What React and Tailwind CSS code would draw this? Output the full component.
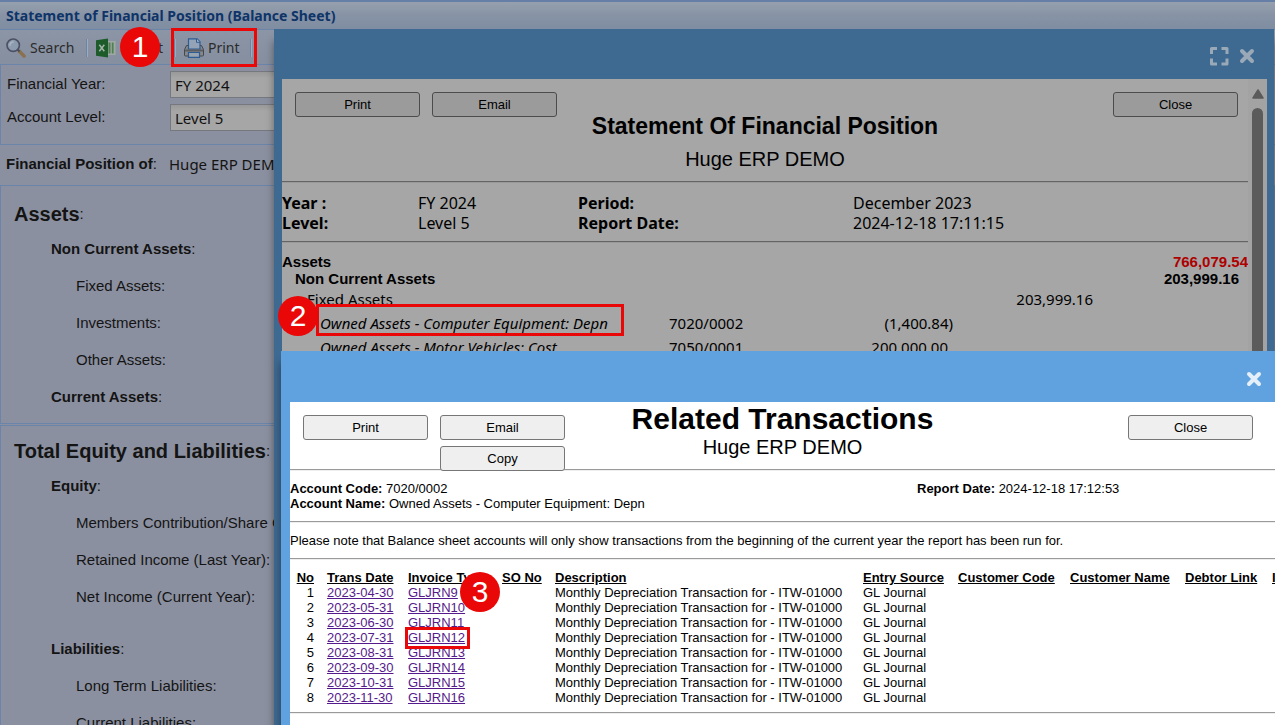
const ARIAL = "font-['Liberation_Sans',Arial,sans-serif]"
const TAHOMA = "font-['Noto_Sans',Tahoma,sans-serif]"

const assetRows = [
  { label: 'Non Current Assets', group: true },
  { label: 'Fixed Assets' },
  { label: 'Investments' },
  { label: 'Other Assets' },
  { label: 'Current Assets', group: true },
]

const equityRows = [
  { label: 'Equity', group: true },
  { label: 'Members Contribution/Share Capital' },
  { label: 'Retained Income (Last Year)' },
  { label: 'Net Income (Current Year)' },
]

const liabilityRows = [
  { label: 'Liabilities', group: true },
  { label: 'Long Term Liabilities' },
  { label: 'Current Liabilities' },
]

const transactions = [
  { date: '2023-04-30', invoice: 'GLJRN9' },
  { date: '2023-05-31', invoice: 'GLJRN10' },
  { date: '2023-06-30', invoice: 'GLJRN11' },
  { date: '2023-07-31', invoice: 'GLJRN12' },
  { date: '2023-08-31', invoice: 'GLJRN13' },
  { date: '2023-09-30', invoice: 'GLJRN14' },
  { date: '2023-10-31', invoice: 'GLJRN15' },
  { date: '2023-11-30', invoice: 'GLJRN16' },
]

const columns = [
  { label: 'Trans Date', width: 'w-[81px]' },
  { label: 'Invoice Type', width: 'w-[94px]' },
  { label: 'SO No', width: 'w-[53px]' },
  { label: 'Description', width: 'w-[308px]' },
  { label: 'Entry Source', width: 'w-[95px]' },
  { label: 'Customer Code', width: 'w-[112px]' },
  { label: 'Customer Name', width: 'w-[115px]' },
  { label: 'Debtor Link', width: 'w-[87px]' },
  { label: 'Invoice No', width: 'w-[100px]' },
]

/* ---------- icons ---------- */

function SearchIcon() {
  return (
    <svg className="w-5 h-5 shrink-0" viewBox="0 0 20 20" fill="none">
      <path d="M13.5 13.500l4.500 4.500" stroke="#8a7250" strokeWidth="3.6" strokeLinecap="round" />
      <path d="M11.500 11.500l2 2" stroke="#4a4f57" strokeWidth="2.200" />
      <circle cx="7.200" cy="7.200" r="6.200" fill="#8d9bae" stroke="#4b5065" strokeWidth="1.600" />
      <path d="M4 7.200a3.400 3.400 0 013.200-3.200" stroke="#a9b4c1" strokeWidth="1.600" strokeLinecap="round" />
    </svg>
  )
}

function ExcelIcon() {
  return (
    <svg className="w-5 h-5 shrink-0" viewBox="0 0 20 20">
      <path d="M11 3h8.500v14H11z" fill="#a0a8a2" />
      <path d="M12.500 4.500h2v11h-2zM15.800 4.500h1.800v11h-1.800z" fill="#4c8252" />
      <path d="M0 2.200L12 .5v19L0 17.800z" fill="#1d5c2a" />
      <path d="M3.300 6.800l5 6.400M8.300 6.800l-5 6.400" stroke="#a5b5a8" strokeWidth="1.500" />
    </svg>
  )
}

function PrinterIcon() {
  return (
    <svg className="w-5 h-5 shrink-0" viewBox="0 0 20 20">
      <path
        d="M2.500 7.500h15l2 4V17a1 1 0 01-1 1h-17a1 1 0 01-1-1v-5.500z"
        fill="#84878b"
        stroke="#45484d"
      />
      <path d="M4.500 11V.8h8.500l3 3V11z" fill="#94a3b5" stroke="#2d5c94" strokeWidth="1.200" />
      <path d="M12.500 .8v3.500h3.500" fill="#a8b4c0" stroke="#2d5c94" />
      <path d="M1 11.500h18v2H1z" fill="#5a5d61" />
      <path d="M4.500 14.500h11v4.800h-11z" fill="#98a3b0" stroke="#2d5c94" strokeWidth="1.200" />
    </svg>
  )
}

function CloseIcon() {
  return (
    <svg className="w-4 h-4" viewBox="0 0 16 16" fill="none">
      <path d="M3 3l10 10M13 3L3 13" stroke="currentColor" strokeWidth="4" strokeLinecap="round" />
    </svg>
  )
}

function ExpandIcon() {
  return (
    <svg className="w-5 h-5" viewBox="0 0 20 20" fill="none">
      <path
        d="M2.500 8V2.500H8M12.500 2.500H18V8M18 12.500V18h-5.500M8 18H2.500v-5.500"
        stroke="currentColor"
        strokeWidth="3"
        strokeLinejoin="round"
      />
    </svg>
  )
}

/* ---------- shared pieces ---------- */

function ReportButton({ dim, children }) {
  return (
    <button
      type="button"
      className={`relative w-[125px] h-[25px] shrink-0 rounded-[3px] border text-[13px] leading-none text-black ${
        dim ? 'bg-[#9b9b9b] border-[#4c4c4c]' : 'bg-[#efefef] border-[#767676]'
      }`}
    >
      {children}
    </button>
  )
}

function Rule({ dim }) {
  return (
    <hr
      className={`h-[2px] border-t border-b ${
        dim ? 'border-t-[#646464] border-b-[#999999]' : 'border-t-[#9a9a9a] border-b-[#eeeeee]'
      }`}
    />
  )
}

function Marker({ className, children }) {
  return (
    <span
      className={`absolute w-10 h-10 rounded-full bg-[#ea0707] text-white text-[30px] leading-10 text-center ${className}`}
    >
      {children}
    </span>
  )
}

function Highlight({ className }) {
  return <div className={`absolute border-3 border-[#ea0707] pointer-events-none ${className}`} />
}

/* ---------- main page ---------- */

function Separator() {
  return <span className="w-[2px] h-[18px] border-l border-[#6685ad] bg-[#a3aab4]" />
}

function Toolbar() {
  return (
    <div
      className={`flex items-center h-9 pt-px border-t border-b border-[#6a84aa] bg-linear-to-b from-[#8b95a5] to-[#858f9f] text-sm text-[#2b2b2b] ${TAHOMA}`}
    >
      <button type="button" className="flex items-center gap-1 w-[86px] pl-1.5">
        <SearchIcon />
        Search
      </button>
      <Separator />
      <button type="button" className="flex items-center gap-1 w-[86px] pl-2">
        <ExcelIcon />
        Export
      </button>
      <Separator />
      <button type="button" className="flex items-center gap-1 w-[74px] pl-2">
        <PrinterIcon />
        Print
      </button>
      <Separator />
    </div>
  )
}

function Field({ id, label, value }) {
  return (
    <div className="flex items-start h-[33px]">
      <label htmlFor={id} className="w-[163px] pt-[5px] text-[15px] leading-4">
        {label}:
      </label>
      <input
        id={id}
        defaultValue={value}
        className={`w-[260px] h-[27px] px-1 border border-[#75797f] bg-linear-to-b from-[#999999] to-[#a6a6a6] to-25% text-[15px] text-[#111] ${TAHOMA}`}
      />
    </div>
  )
}

function Rows({ rows }) {
  return rows.map(({ label, group }) => (
    <div key={label} className={`flex items-center h-[37px] whitespace-nowrap ${group ? 'pl-[50px]' : 'pl-[75px]'}`}>
      {group ? (
        <>
          <b>{label}</b>:
        </>
      ) : (
        `${label}:`
      )}
    </div>
  ))
}

function SectionTitle({ children }) {
  return (
    <h2 className="flex items-center h-[34px] pl-[13px] whitespace-nowrap">
      <b className="text-xl">{children}</b>:
    </h2>
  )
}

function BalanceSheetPage() {
  return (
    <main className="h-full text-[15px] text-[#141414] bg-[#8b90a0]">
      <div className="h-[29px] px-1.5 border-t-2 border-[#657fa6] bg-linear-to-b from-[#96a0ae] from-0% via-[#8793a5] via-50% to-[#7f8da2]">
        <h1 className={`text-sm leading-7 font-bold text-[#0e3468] ${TAHOMA}`}>
          Statement of Financial Position (Balance Sheet)
        </h1>
      </div>
      <Toolbar />
      <form className="h-20 pt-1.5 pl-1.5 border-l border-b border-[#6a84aa]">
        <Field id="year" label="Financial Year" value="FY 2024" />
        <Field id="level" label="Account Level" value="Level 5" />
      </form>
      <div className="flex items-center h-10 pl-1.5 pb-0.5 whitespace-nowrap">
        <div className="w-[163px]">
          <b>Financial Position of</b>:
        </div>
        <span className={TAHOMA}>Huge ERP DEMO</span>
      </div>
      <section className="pt-[11px] pb-[7px] border border-[#6a84aa]">
        <SectionTitle>Assets</SectionTitle>
        <Rows rows={assetRows} />
      </section>
      <section className="mt-px pt-2 border border-[#6a84aa]">
        <SectionTitle>Total Equity and Liabilities</SectionTitle>
        <Rows rows={equityRows} />
        <div className="mt-[15px]">
          <Rows rows={liabilityRows} />
        </div>
      </section>
    </main>
  )
}

/* ---------- first dialog ---------- */

function StatementDialog() {
  return (
    <div
      role="dialog"
      aria-label="Statement Of Financial Position"
      className="absolute left-[274px] right-px top-[29px] bottom-0 flex flex-col pl-2 pr-[7px] bg-[#3e6990] shadow-[0_12px_8px_rgba(0,0,0,0.4)]"
    >
      <div className="flex items-center justify-end gap-2.5 h-[50px] shrink-0 pt-1 pr-3 text-[#9aa9b8]">
        <button type="button" aria-label="Expand">
          <ExpandIcon />
        </button>
        <button type="button" aria-label="Close">
          <CloseIcon />
        </button>
      </div>

      <div className="flex flex-1 min-h-0 bg-[#a6a6a6] text-black">
        <div className="flex-1 min-w-0 overflow-hidden">
          <header className="grid grid-cols-[1fr_auto_1fr] h-[102px]">
            <div className="flex gap-3 pt-[13px] pl-[13px]">
              <ReportButton dim>Print</ReportButton>
              <ReportButton dim>Email</ReportButton>
            </div>
            <div className="pt-8 text-center">
              <h2 className="text-[23px] leading-[30px] font-bold">Statement Of Financial Position</h2>
              <p className="mt-1.5 text-xl leading-6">Huge ERP DEMO</p>
            </div>
            <div className="flex justify-end pt-[13px] pr-2.5">
              <ReportButton dim>Close</ReportButton>
            </div>
          </header>
          <Rule dim />
          <dl
            className={`grid grid-cols-[136px_160px_275px_1fr] content-start h-[58px] pt-2.5 text-base leading-5 [&_dt]:font-bold ${TAHOMA}`}
          >
            <dt>Year :</dt>
            <dd>FY 2024</dd>
            <dt>Period:</dt>
            <dd>December 2023</dd>
            <dt>Level:</dt>
            <dd>Level 5</dd>
            <dt>Report Date:</dt>
            <dd>2024-12-18 17:11:15</dd>
          </dl>
          <Rule dim />
          <table className={`w-full mt-2.5 table-fixed text-[15px] whitespace-nowrap ${TAHOMA}`}>
            <colgroup>
              <col className="w-[387px]" />
              <col className="w-[140px]" />
              <col className="w-[144px]" />
              <col className="w-[140px]" />
              <col />
            </colgroup>
            <tbody>
              <tr className={`h-[17px] leading-[17px] font-bold ${ARIAL}`}>
                <td colSpan={4}>Assets</td>
                <td className="text-right text-[#ae0000]">766,079.54</td>
              </tr>
              <tr className={`h-[17px] leading-[17px] font-bold ${ARIAL}`}>
                <td colSpan={4} className="pl-[13px]">
                  Non Current Assets
                </td>
                <td className="text-right pr-[9px]">203,999.16</td>
              </tr>
              <tr className="h-6">
                <td colSpan={3} className="pl-[25px]">
                  Fixed Assets
                </td>
                <td className="text-right">203,999.16</td>
                <td />
              </tr>
              <tr className="h-6">
                <td className="pl-[38px] italic">Owned Assets - Computer Equipment: Depn</td>
                <td>7020/0002</td>
                <td className="text-right">(1,400.84)</td>
                <td />
                <td />
              </tr>
              <tr className="h-6">
                <td className="pl-[38px] italic">Owned Assets - Motor Vehicles: Cost</td>
                <td>7050/0001</td>
                <td className="text-right pr-[5px]">200,000.00</td>
                <td />
                <td />
              </tr>
            </tbody>
          </table>
        </div>

        {/* Scrollbar */}
        <div className="flex flex-col items-center gap-[9px] w-[19px] pt-[10px] bg-[#a3a3a3]">
          <svg className="w-3 h-2.5 shrink-0" viewBox="0 0 12 10">
            <path d="M6 1l5 8H1z" fill="#5b5b5b" stroke="#5b5b5b" strokeWidth="1.500" strokeLinejoin="round" />
          </svg>
          <div className="w-[11px] flex-1 rounded-full bg-[#5b5b5b]" />
        </div>
      </div>
    </div>
  )
}

/* ---------- second dialog ---------- */

function TransactionsDialog() {
  return (
    <div
      role="dialog"
      aria-label="Related Transactions"
      className="absolute left-[281px] right-0 top-[351px] bottom-0 flex flex-col pl-[9px] bg-[#60a2df] shadow-[0_12px_8px_rgba(0,0,0,0.4)]"
    >
      <div className="flex items-center justify-end h-[51px] shrink-0 pt-1 pr-[13px] text-[#e4effa]">
        <button type="button" aria-label="Close">
          <CloseIcon />
        </button>
      </div>

      <div className="flex-1 min-h-0 overflow-hidden bg-white text-[13px] leading-[15px] text-black">
        <header className="grid grid-cols-[1fr_auto_1fr] h-[67px]">
          <div className="flex gap-3 pt-[13px] pl-[13px]">
            <ReportButton>Print</ReportButton>
            <div className="flex flex-col gap-1.5">
              <ReportButton>Email</ReportButton>
              <ReportButton>Copy</ReportButton>
            </div>
          </div>
          <div className="text-center">
            <h2 className="text-[30px] leading-[33px] font-bold">Related Transactions</h2>
            <p className="text-xl leading-6">Huge ERP DEMO</p>
          </div>
          <div className="flex justify-end pt-[13px] pr-[22px]">
            <ReportButton>Close</ReportButton>
          </div>
        </header>
        <Rule />
        <div className="flex h-[50px] pt-2.5">
          <div className="w-[627px]">
            <p>
              <b>Account Code:</b> 7020/0002
            </p>
            <p>
              <b>Account Name:</b> Owned Assets - Computer Equipment: Depn
            </p>
          </div>
          <p>
            <b>Report Date:</b> 2024-12-18 17:12:53
          </p>
        </div>
        <Rule />
        <p className="h-[35px] pt-2.5">
          Please note that Balance sheet accounts will only show transactions from the beginning of the current year the
          report has been run for.
        </p>
        <Rule />
        <table className="w-[1082px] mt-2.5 mb-[7px] table-fixed whitespace-nowrap">
          <thead>
            <tr className="text-left underline">
              <th className="w-[37px] pr-[13px] text-right">No</th>
              {columns.map(({ label, width }) => (
                <th key={label} className={width}>
                  {label}
                </th>
              ))}
            </tr>
          </thead>
          <tbody>
            {transactions.map(({ date, invoice }, i) => (
              <tr key={invoice}>
                <td className="pr-[13px] text-right">{i + 1}</td>
                <td>
                  <a href="#" className="text-[#551a8b] underline">
                    {date}
                  </a>
                </td>
                <td>
                  <a href="#" className="text-[#551a8b] underline">
                    {invoice}
                  </a>
                </td>
                <td />
                <td>Monthly Depreciation Transaction for - ITW-01000</td>
                <td>GL Journal</td>
                <td />
                <td />
                <td />
                <td />
              </tr>
            ))}
          </tbody>
        </table>
        <Rule />
      </div>
    </div>
  )
}

export default function App() {
  return (
    <div className={`relative h-screen overflow-hidden ${ARIAL}`}>
      <BalanceSheetPage />
      <StatementDialog />
      <TransactionsDialog />

      {/* Step annotations */}
      <Highlight className="left-[171px] top-[28px] w-[86px] h-[39px]" />
      <Marker className="left-[120px] top-[27px]">1</Marker>
      <Highlight className="left-[316px] top-[304px] w-[308px] h-[32px]" />
      <Marker className="left-[278px] top-[296px]">2</Marker>
      <Highlight className="left-[405px] top-[627px] w-[65px] h-[22px]" />
      <Marker className="left-[460px] top-[572px]">3</Marker>
    </div>
  )
}
